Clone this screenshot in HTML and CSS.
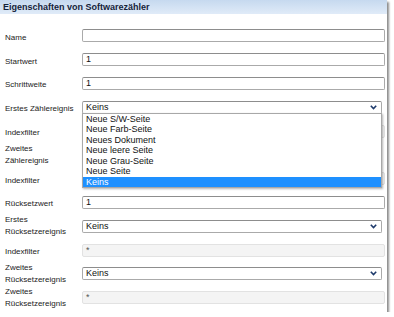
FILE: index.html
```html
<!DOCTYPE html>
<html lang="de">
<head>
  <meta charset="UTF-8">
  <title>Eigenschaften von Softwarezähler</title>
  <link rel="stylesheet" href="styles.css">
</head>
<body>
  <div class="panel">
    <div class="panel-header">Eigenschaften von Softwarezähler</div>
    <div class="form">
      <div class="row">
        <label class="lbl">Name</label>
        <div class="field"><div class="input"></div></div>
      </div>
      <div class="row">
        <label class="lbl">Startwert</label>
        <div class="field"><div class="input">1</div></div>
      </div>
      <div class="row">
        <label class="lbl">Schrittweite</label>
        <div class="field"><div class="input">1</div></div>
      </div>
      <div class="row">
        <label class="lbl">Erstes Zählereignis</label>
        <div class="field">
          <div class="combo open">
            <span>Keins</span>
            <svg class="arrow" width="7" height="5" viewBox="0 0 7 5"><path d="M0.8 0.8 L3.5 3.5 L6.2 0.8" fill="none" stroke="#1d3a6b" stroke-width="1.6"/></svg>
          </div>
          <!-- offene Auswahlliste -->
          <ul class="list">
            <li>Neue S/W-Seite</li>
            <li>Neue Farb-Seite</li>
            <li>Neues Dokument</li>
            <li>Neue leere Seite</li>
            <li>Neue Grau-Seite</li>
            <li>Neue Seite</li>
            <li class="selected">Keins</li>
          </ul>
        </div>
      </div>
      <!-- die nächsten Felder liegen unter der Liste -->
      <div class="row">
        <label class="lbl">Indexfilter</label>
        <div class="field"><div class="input disabled"></div></div>
      </div>
      <div class="row">
        <label class="lbl two">Zweites Zählereignis</label>
        <div class="field"><div class="combo"></div></div>
      </div>
      <div class="row">
        <label class="lbl">Indexfilter</label>
        <div class="field"><div class="input disabled"></div></div>
      </div>
      <div class="row">
        <label class="lbl">Rücksetzwert</label>
        <div class="field"><div class="input">1</div></div>
      </div>
      <div class="row">
        <label class="lbl two">Erstes Rücksetzereignis</label>
        <div class="field">
          <div class="combo">
            <span>Keins</span>
            <svg class="arrow" width="7" height="5" viewBox="0 0 7 5"><path d="M0.8 0.8 L3.5 3.5 L6.2 0.8" fill="none" stroke="#1d3a6b" stroke-width="1.6"/></svg>
          </div>
        </div>
      </div>
      <div class="row">
        <label class="lbl">Indexfilter</label>
        <div class="field"><div class="input disabled">*</div></div>
      </div>
      <div class="row">
        <label class="lbl two">Zweites Rücksetzereignis</label>
        <div class="field">
          <div class="combo">
            <span>Keins</span>
            <svg class="arrow" width="7" height="5" viewBox="0 0 7 5"><path d="M0.8 0.8 L3.5 3.5 L6.2 0.8" fill="none" stroke="#1d3a6b" stroke-width="1.6"/></svg>
          </div>
        </div>
      </div>
      <div class="row">
        <label class="lbl two">Zweites Rücksetzereignis</label>
        <div class="field"><div class="input disabled">*</div></div>
      </div>
    </div>
  </div>
</body>
</html>
```

FILE: styles.css
```css
/* Dialog im Stil eines ExtJS-Panels */
body {
  margin: 0;
  background: #fff;
  font-family: "Liberation Sans", Arial, sans-serif;
}

.panel {
  width: 387px;
  height: 312px;
  background: #fff;
  box-shadow: 2px 2px 2px rgba(0, 0, 0, 0.45);
}

.panel-header {
  height: 14px;
  line-height: 14px;
  padding-left: 3px;
  font-size: 9px;
  font-weight: bold;
  color: #15233a;
  background: linear-gradient(#c6d9ef, #e0ebf8);
}

.form {
  padding: 10px 2px 0 5px;
}

.row {
  display: grid;
  grid-template-columns: 77px 1fr;
  height: 23.8px;
  align-items: center;
}

.lbl {
  width: 71px;
  font-size: 8px;
  line-height: 12px;
  color: #222;
  padding-top: 4px;
}

.lbl.two {
  padding-top: 0;
}

.field {
  position: relative;
}

.input {
  box-sizing: border-box;
  height: 13px;
  border: 1px solid #aaa;
  border-top-color: #8d8d8d;
  border-radius: 2px;
  padding: 0 3px;
  font-size: 9px;
  line-height: 11px;
  color: #111;
  background: #fff;
}

.input.disabled {
  background: #f4f4f4;
  border-color: #e2e2e2;
  color: #555;
}

.combo {
  box-sizing: border-box;
  width: 300px;
  height: 13px;
  border: 1px solid #aaa;
  border-top-color: #8d8d8d;
  border-radius: 2px;
  padding: 0 3px;
  font-size: 9px;
  line-height: 11px;
  color: #111;
  background: #fff;
  display: flex;
  justify-content: space-between;
  align-items: center;
}

.combo .arrow {
  margin-right: 1px;
}

/* Popup der Auswahlliste */
.list {
  position: absolute;
  top: 12px;
  left: 0;
  width: 300px;
  box-sizing: border-box;
  margin: 0;
  padding: 0;
  list-style: none;
  background: #fff;
  border: 1px solid #a8a8a8;
  box-shadow: 1px 1px 2px rgba(0, 0, 0, 0.3);
  font-size: 9px;
  z-index: 2;
}

.list li {
  height: 10.5px;
  line-height: 10.5px;
  padding-left: 3px;
  color: #111;
}

.list li.selected {
  background: #1e90ff;
  color: #fff;
}
```
